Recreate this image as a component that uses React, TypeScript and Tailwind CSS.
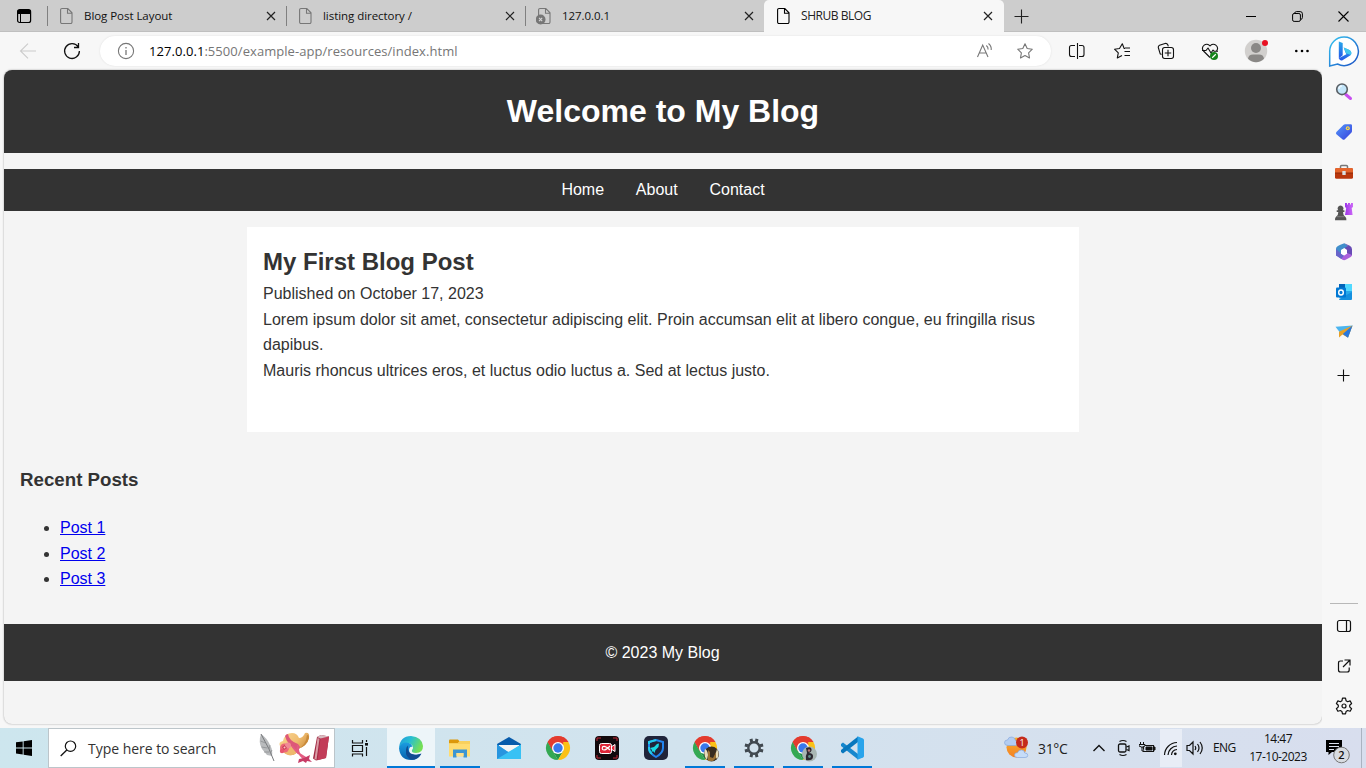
import React from "react";

const ui = "font-['Open_Sans','Noto_Sans',sans-serif]";

type P = { children: React.ReactNode; w?: number; h?: number; vb?: string; className?: string };
const Svg = ({ children, w = 24, h = 24, vb, className = "" }: P) => (
  <svg width={w} height={h} viewBox={vb ?? `0 0 ${w} ${h}`} fill="none" className={`block shrink-0 ${className}`}>
    {children}
  </svg>
);

const FileIcon = ({ color, error }: { color: string; error?: boolean }) => (
  <Svg w={16} h={18}>
    <path d="M4 1.5h5.8L14 5.8v9.2a1.4 1.4 0 0 1-1.4 1.5H4A1.4 1.4 0 0 1 2.6 15V3A1.4 1.4 0 0 1 4 1.5Z M9.5 1.6v4.6h4.4" stroke={color} strokeWidth="1.1" />
    {error && (
      <>
        <circle cx="4.6" cy="12.5" r="4.9" fill="#767676" />
        <path d="m3 10.900 3.200 3.200m0-3.200L3 14.100" stroke="#d8d8d8" strokeWidth="1.1" />
      </>
    )}
  </Svg>
);

const Close = () => (
  <Svg w={10} h={10}>
    <path d="m1 1 8 8M9 1 1 9" stroke="#222" strokeWidth="1.2" />
  </Svg>
);

const Tab = ({ title, error }: { title: string; error?: boolean }) => (
  <div className="flex h-8 w-[239px] shrink-0 items-center pr-[10px]">
    <div className="h-5 w-px bg-[#808080]" />
    <div className="ml-[10px]"><FileIcon color="#777" error={error} /></div>
    <span className="ml-[10px] flex-1 text-[11.5px] tracking-[-0.05px] text-[#111]">{title}</span>
    <Close />
  </div>
);

const TabBar = () => (
  <div className="flex h-8 shrink-0 bg-[#cdcdcd] shadow-[inset_0_-1px_0_#bfbfbf]">
    <div className="flex w-[47px] items-center pl-4">
      <Svg w={16} h={16}>
        <rect x="1.6" y="1.700" width="13" height="12.800" rx="2" stroke="#000" strokeWidth="1.200" />
        <path d="M2 2.500h12v3H2zM4.500 5v9" fill="#000" stroke="#000" />
      </Svg>
    </div>
    <Tab title="Blog Post Layout" />
    <Tab title="listing directory /" />
    <Tab title="127.0.0.1" error />
    <div className="flex h-8 w-[240px] items-center rounded-t-[5px] bg-[#f7f7f7] pr-[11px] pl-[11px]">
      <FileIcon color="#000" />
      <span className="ml-[10px] flex-1 text-[12px] tracking-[-0.45px] text-[#222]">SHRUB BLOG</span>
      <Close />
    </div>
    <div className="flex items-center pl-[10px]">
      <Svg w={15} h={15}><path d="M7.500 .5v14M.5 7.500h14" stroke="#222" strokeWidth="1.100" /></Svg>
    </div>
    <div className="ml-auto flex items-center">
      <div className="flex w-[46px] justify-center"><Svg w={10} h={10}><path d="M0 5.500h10" stroke="#000" /></Svg></div>
      <div className="flex w-[46px] justify-center">
        <Svg w={11} h={11}>
          <rect x=".6" y="2.500" width="7.800" height="7.900" rx="1.500" stroke="#000" />
          <path d="M2.500 2.200Q3 .6 4.500.6h3.700q2.200 0 2.200 2.200v3.700q0 1.500-1.500 2" stroke="#000" />
        </Svg>
      </div>
      <div className="flex w-[46px] justify-center"><Svg w={11} h={11}><path d="m.5.5 10 10m0-10-10 10" stroke="#000" strokeWidth="1.100" /></Svg></div>
    </div>
  </div>
);

const STAR = "m9 1.800 2.200 4.700 5.100.7-3.700 3.600.9 5.100L9 13.500l-4.500 2.400.9-5.100-3.700-3.600 5.100-.7Z";

const Toolbar = () => (
  <div className="flex h-[38px] shrink-0 items-center bg-[#f7f7f7]">
    <div className="flex w-[100px] pl-[19px]">
      <Svg w={18} h={18}><path d="M17 9H1.500M9 1.700 1.500 9 9 16.300" stroke="#ccc" strokeWidth="1.100" /></Svg>
      <Svg w={18} h={18} className="ml-[26px]">
        <path d="M15.200 5A7.400 7.400 0 1 0 16.400 9M15.500 1v4.500H11" stroke="#111" strokeWidth="1.300" />
      </Svg>
    </div>
    <div className="flex h-[30px] w-[951px] items-center rounded-full bg-white pr-[17px] pl-[17px] shadow-[0_0_2px_#ddd]">
      <Svg w={18} h={18}>
        <circle cx="9" cy="9" r="7.600" stroke="#777" strokeWidth="1.100" />
        <path d="M9 8v5M9 5v1.500" stroke="#777" strokeWidth="1.300" />
      </Svg>
      <span className="ml-[14px] flex-1 pt-px text-[13px] tracking-[0.06px] text-[#767676]">
        <span className="text-black">127.0.0.1</span>:5500/example-app/resources/index.html
      </span>
      <Svg w={18} h={18}>
        <path d="M1.500 15 6.700 3 12 15M3.400 11h6.800M10.300 3.500q2 1.600 1.800 4M12.500 1.500q3.200 2.600 2.700 6.500" stroke="#777" strokeWidth="1.100" />
      </Svg>
      <Svg w={18} h={18} className="ml-[22px]"><path d={STAR} stroke="#777" strokeWidth="1.100" strokeLinejoin="round" /></Svg>
    </div>
    <div className="flex flex-1 items-center pl-[17px]">
      <Svg w={18} h={18}>
        <path d="M7 3.500H3.500Q1.500 3.500 1.500 5.500v7q0 2 2 2H7M11 3.500h3q2 0 2 2v7q0 2-2 2H11M9.500 1v16" stroke="#111" strokeWidth="1.100" />
      </Svg>
      <Svg w={18} h={18} className="ml-[27px]">
        <path d="M12 6.500h-.8L9.300 1.800 6.500 6.500l-5 .7 3.800 3.700-1 5L9 13.500M11.500 9.500H17M11.500 13.500H17M12 6h5" stroke="#111" strokeWidth="1.100" strokeLinejoin="round" />
      </Svg>
      <Svg w={18} h={18} className="ml-[26px]">
        <path d="M4.500 12.500 3.200 11.800 1.300 5.500Q1 4 2.500 3.300L8 1.500q2-.4 2.800 1.300l.5 1.500" stroke="#111" strokeWidth="1.100" />
        <rect x="5.500" y="5.500" width="11" height="11" rx="2.200" stroke="#111" strokeWidth="1.100" />
        <path d="M11 7.800v6.400M7.800 11h6.400" stroke="#111" strokeWidth="1.100" />
      </Svg>
      <Svg w={20} h={19} className="ml-[26px]">
        <path d="M9 15.500 2.500 9C-.8 4.500 5.500-.5 9 4c3.500-4.500 9.800.5 6.500 5M1 8.500h4L7 6l3 5 2-3 1 1.200h4" stroke="#111" strokeWidth="1.100" strokeLinejoin="round" />
        <circle cx="13" cy="14" r="4" fill="#15831a" />
        <path d="m11.200 15.700 3.600-3.400" stroke="#fff" strokeWidth="1.200" />
      </Svg>
      <Svg w={26} h={26} className="ml-[23px]">
        <circle cx="12" cy="13" r="11.200" fill="#d2d0ce" />
        <circle cx="12" cy="10" r="5" fill="#8a8886" />
        <path d="M4 20.800Q4.500 16.500 9 16.500h6q4.500 0 5 4.300Q16.500 24.200 12 24.200T4 20.800Z" fill="#8a8886" />
        <circle cx="21" cy="5" r="3" fill="#e81123" />
      </Svg>
      <Svg w={16} h={16} className="ml-6">
        <circle cx="2.300" cy="8" r="1.300" fill="#000" /><circle cx="8" cy="8" r="1.300" fill="#000" /><circle cx="13.500" cy="8" r="1.300" fill="#000" />
      </Svg>
    </div>
  </div>
);

const Page = () => (
  <div className="ml-1 h-[654px] w-[1318px] overflow-hidden rounded-lg bg-[#f4f4f4] font-['Liberation_Sans',Arial,sans-serif] text-base leading-[1.6] text-[#333] shadow-[0_0_2px_#999]">
    <header className="bg-[#333] p-4 text-center text-white">
      <h1 className="text-[32px] leading-[51.2px] font-bold">Welcome to My Blog</h1>
    </header>
    <nav className="my-4 flex justify-center gap-[31.8px] bg-[#333] py-2 text-white">
      <a>Home</a>
      <a>About</a>
      <a>Contact</a>
    </nav>
    <article className="mx-auto h-[205px] w-[832px] bg-white p-4">
      <h2 className="text-2xl leading-[38.4px] font-bold">My First Blog Post</h2>
      <p>Published on October 17, 2023</p>
      <p>Lorem ipsum dolor sit amet, consectetur adipiscing elit. Proin accumsan elit at libero congue, eu fringilla risus dapibus.</p>
      <p>Mauris rhoncus ultrices eros, et luctus odio luctus a. Sed at lectus justo.</p>
    </article>
    <aside className="mt-[17.5px] p-4">
      <h3 className="mb-[19.8px] text-[18.72px] leading-[30px] font-bold">Recent Posts</h3>
      <ul className="mb-4 list-disc pl-10">
        <li><a className="text-[#0000ee] underline">Post 1</a></li>
        <li><a className="text-[#0000ee] underline">Post 2</a></li>
        <li><a className="text-[#0000ee] underline">Post 3</a></li>
      </ul>
    </aside>
    <footer className="h-[57px] bg-[#333] p-4 pr-[17px] text-center text-white">© 2023 My Blog</footer>
  </div>
);

const Cell = ({ children }: { children: React.ReactNode }) => (
  <div className="flex h-10 w-full items-center justify-center">{children}</div>
);

const Sidebar = () => (
  <div className="flex w-11 flex-col items-center bg-[#f7f7f7]">
    <Cell>
      <Svg w={32} h={32}>
        <defs>
          <linearGradient id="ring" x1="0" y1="0" x2="1" y2="1"><stop stopColor="#35c5f0" /><stop offset="1" stopColor="#1b4fc4" /></linearGradient>
          <linearGradient id="bee" x1="0" y1="0" x2="0" y2="1"><stop stopColor="#28a8ea" /><stop offset="1" stopColor="#2357e8" /></linearGradient>
        </defs>
        <path d="M16 1A14.300 14.300 0 1 1 9.500 28L1.700 30V15.300A14.300 14.300 0 0 1 16 1Z" fill="#fff" stroke="url(#ring)" strokeWidth="1.500" />
        <path d="m10.800 5.500 3.900 1.500v12.200l-3.900 3.300Z" fill="url(#bee)" />
        <path d="m15.700 11.500 5.200 2.300q3.500 1.800 2 5.200l-8.400 5.200q-2.500.8-3.700-2l7.600-4-1.300-2.600Z" fill="url(#bee)" />
        <path d="m15.700 11.500 5.200 2.300q3.500 1.800 2 5.200l-5-1.700-.7-2Z" fill="#42c8ed" />
      </Svg>
    </Cell>
    <Cell>
      <Svg w={18} h={18} className="mr-px">
        <path d="m10.800 11.500 4.700 4" stroke="#c84ef0" strokeWidth="3" strokeLinecap="round" />
        <circle cx="7" cy="6.300" r="5.300" fill="#c3e6fa" stroke="#595f65" strokeWidth="1.600" />
        <path d="M4 6a3 3 0 0 1 3-3" stroke="#edf8ff" strokeWidth="1.500" />
      </Svg>
    </Cell>
    <Cell>
      <Svg w={18} h={18}>
        <defs><linearGradient id="tag" x1="0" y1="0" x2="1" y2="1"><stop stopColor="#5598fa" /><stop offset="1" stopColor="#3740dc" /></linearGradient></defs>
        <path d="m1.400 9 7-7Q9 1.300 10.200 1.200h5.500q1.300 0 1.300 1.300V8q0 1-.7 1.700l-6.500 6.500q-1.200 1-2.400 0L1.400 11.300q-1-1.100 0-2.300Z" fill="url(#tag)" />
        <circle cx="12.800" cy="5.200" r="2" fill="#f9d84a" /><circle cx="12.800" cy="5.200" r=".8" fill="#4267d5" />
      </Svg>
    </Cell>
    <Cell>
      <Svg w={20} h={18}>
        <path d="M6.500 5V3.600q0-1.200 1.200-1.200h4.600q1.200 0 1.200 1.200V5" stroke="#777" strokeWidth="1.500" />
        <rect x="1" y="5" width="18" height="10.800" rx="1.500" fill="#b9370d" /><path d="M2.500 5h15Q19 5 19 6.500V10H1V6.500Q1 5 2.500 5Z" fill="#e5652c" />
        <path d="M1 10h18" stroke="#8e2d0b" /><rect x="8.300" y="8" width="3.400" height="4" rx=".6" fill="#d9dfe2" />
      </Svg>
    </Cell>
    <Cell>
      <Svg w={20} h={20}>
        <defs><linearGradient id="rook" x1="0" y1="0" x2="1" y2="0"><stop stopColor="#9b35e8" /><stop offset="1" stopColor="#cf6af7" /></linearGradient></defs>
        <path d="M11 1h2v1.500h1V1h2v1.500h1V1h2v4l-1.300 1 .9 7H11l1.200-7-1.200-1Z" fill="url(#rook)" />
        <path d="M6.500 3.500A3 3 0 0 1 8.900 8.300h1.500V10H9q0 3 2 4.500 1.700 1 1.400 3.800H1q-.3-2.800 1.300-3.800 2-1.500 2-4.500H2.700V8.300h1.500a3 3 0 0 1 2.300-4.800Z" fill="#555" />
        <path d="M3 14.700h7.500" stroke="#888" strokeWidth=".8" />
      </Svg>
    </Cell>
    <Cell>
      <Svg w={18} h={18}>
        <path d="M6 1.600 9.300.3l3.500 2.500v3L9.500 5 6 7v4.700L1 12.500V5.800q0-2.500 5-4.200Z" fill="#418fcb" />
        <path d="m9.300.3 5.500 2.500q2.200 1.200 2.200 3.500v6.200l-5-2V7L9.500 5l3.300-2Z" fill="#684bb5" />
        <path d="m17 12-5-2-3 2.500-3-1.500-5 1 6.500 4.800q1.600.8 3.200 0l5-2.800q1.300-.9 1.300-2Z" fill="#aa60dc" />
        <path d="M1 6 6 10.500l3 2-2.700 3.600L1 12.500Z" fill="#6864ca" />
        <path d="m9 5.500 3 1.700v3.500L9 12.500l-3-1.800V7.200Z" fill="#fff" />
      </Svg>
    </Cell>
    <Cell>
      <Svg w={18} h={18}>
        <rect x="4" y="1" width="13" height="14" rx="1" fill="#28a8ea" /><path d="M10 1h7v7h-7z" fill="#50d9ff" /><path d="M4 1h6v7H4z" fill="#0364b8" />
        <path d="m4 16 13-7v7q0 1-1 1H5q-1 0-1-1Z" fill="#1490df" />
        <rect x="1" y="4.500" width="10" height="10" rx="1" fill="#0078d4" /><ellipse cx="6" cy="9.500" rx="2.300" ry="2.500" stroke="#fff" strokeWidth="1.400" />
      </Svg>
    </Cell>
    <Cell>
      <Svg w={18} h={18}>
        <path d="m.5 3.800 17-1.300L13 14.500 4.500 9Z" fill="#4cb5ef" /><path d="M17.500 2.500 4 8.800v5.700l3.500-3 5.500 3Z" fill="#e8a126" /><path d="M17.500 2.500 7.800 11l5.200 3.800Z" fill="#2877dd" />
      </Svg>
    </Cell>
    <div className="mr-px flex h-[47px] items-center">
      <Svg w={13} h={13}><path d="M6.500.5v12M.5 6.500h12" stroke="#111" strokeWidth="1.100" /></Svg>
    </div>
    <div className="mt-auto mb-[2px] h-px w-7 bg-[#b8b8b8]" />
    <Cell>
      <Svg w={16} h={16}><rect x="1.500" y="2.500" width="13" height="11" rx="2" stroke="#111" strokeWidth="1.200" /><path d="M10.500 2.500v11" stroke="#111" strokeWidth="1.200" /></Svg>
    </Cell>
    <Cell>
      <Svg w={16} h={16}><path d="M7 3H4.500q-2 0-2 2v7q0 2 2 2h6.700q2 0 2-2V9.500M8.500 2H14v5.500M14 2 7 9" stroke="#111" strokeWidth="1.200" /></Svg>
    </Cell>
    <div className="mb-[2px] w-full">
      <Cell>
        <Svg w={18} h={18}>
          <path d="m7.500 1.200h3l.6 2.600 1.500.9 2.500-.8 1.500 2.600-1.900 1.800v1.600l1.900 1.800-1.500 2.600-2.500-.8-1.500.9-.6 2.500h-3l-.6-2.500-1.500-.9-2.500.8-1.500-2.600 1.900-1.800V8.300L1.400 6.500l1.500-2.600 2.500.8 1.500-.9Z" stroke="#111" strokeWidth="1.200" strokeLinejoin="round" />
          <circle cx="9" cy="9" r="2" stroke="#111" strokeWidth="1.200" />
        </Svg>
      </Cell>
    </div>
  </div>
);

const Chrome = ({ badge }: { badge?: "gold" | "teal" }) => (
  <Svg w={28} h={28}>
    <path d="M14 14 3.600 8A12 12 0 0 1 24.400 8Z" fill="#ea4335" />
    <path d="M3.600 8 14 26A12 12 0 0 1 3.600 8Z" fill="#34a853" />
    <path d="M3.600 8 8.800 17 14 26l5.500-9.500L14 14Z" fill="#249547" />
    <path d="M24.400 8A12 12 0 0 1 14 26l5.200-9V8Z" fill="#fbc116" />
    <path d="M14 8h10.400A12 12 0 0 0 3.600 8l5.200 9Z" fill="#e33b2e" />
    <circle cx="14" cy="14" r="6" fill="#fff" /><circle cx="14" cy="14" r="4.700" fill="#3978ed" />
    {badge === "gold" && (
      <>
        <circle cx="20.500" cy="20" r="7.500" fill="#382d20" />
        <path d="M14 15q2.500 1 3 6l-1 5Q12 22 14 15ZM26 15q3 5 0 10l-2-3Z" fill="#e9ddba" />
        <path d="m17 16 2 2v5l3 1 3-6v6l-3 3h-5Z" fill="#9b7234" />
      </>
    )}
    {badge === "teal" && (
      <>
        <circle cx="20.500" cy="20" r="7.500" fill="#a9b7b4" />
        <path d="M17 14q5-2 5.500 1t-3 4q5 0 4.500 4t-7 3q-1-4 1-7Z" fill="#2d2831" /><circle cx="20" cy="16.500" r="1.200" fill="#b9787a" /><circle cx="20.500" cy="22.500" r="1.400" fill="#608d88" />
      </>
    )}
  </Svg>
);

const TaskItem = ({ children, state = "idle" }: { children: React.ReactNode; state?: "idle" | "open" | "active" }) => (
  <div className={`mr-px flex h-10 w-12 flex-col items-center ${state === "active" ? "bg-[#edf5f9]" : ""}`}>
    <div className="flex h-[38px] items-center pt-[2px]">{children}</div>
    {state !== "idle" && <div className={`h-[2px] bg-[#0078d7] ${state === "active" ? "w-12" : "w-10"}`} />}
  </div>
);

const Taskbar = () => (
  <div className="flex h-10 shrink-0 items-center bg-linear-to-r from-[#cde6ee] via-[#d2e3ee] to-[#d8deee]">
    <div className="flex w-12 justify-center">
      <Svg w={16} h={16}><path d="m0 2.300 6.700-.9v6H0ZM7.600 1.200 16 0v7.400H7.600ZM0 8.400h6.700v6.200L0 13.600ZM7.600 8.400H16V16l-8.400-1.200Z" fill="#000" /></Svg>
    </div>
    <div className="flex h-10 w-[287px] items-center border border-[#bcc5ca] bg-white pl-[11px]">
      <Svg w={17} h={17}><circle cx="10.500" cy="6.200" r="5.200" stroke="#111" strokeWidth="1.200" /><path d="M6.800 10 .7 16" stroke="#111" strokeWidth="1.300" /></Svg>
      <span className="ml-[11px] flex-1 text-[14px] tracking-[-0.03px] text-[#333]">Type here to search</span>
      <Svg w={76} h={36}>
        <defs>
          <linearGradient id="straw" x1="0" y1="0" x2="1" y2=".6"><stop stopColor="#f9d694" /><stop offset=".6" stopColor="#f0bd70" /><stop offset="1" stopColor="#c98a3a" /></linearGradient>
        </defs>
        <path d="M3 4Q0 12 4 19l5 6 5 1q1-6-2-11Q9 8 3 4Z" fill="#b9bbbd" />
        <path d="m3 4 8 15 5 12" stroke="#77797c" />
        <path d="m2.500 11 5 2M3.500 17l6 1M12 15l-1 4M14 20l-1.500 3M6 22l5.500 0" stroke="#8d8f92" strokeWidth=".8" />
        <path d="M22 16Q20 12 25 11Q27 3 34 3q5 0 7 5 4 0 6-5 5-1 4 5-2 8-11 11-1 7-9 6-8-2-9-9Z" fill="url(#straw)" />
        <path d="M40 19q8-4 9-14 2 0 2 3-2 8-11 11Z" fill="#c98a3a" />
        <path d="M27 6q1-2 3-2 1 7 10 10l2 3-2 4Q29 15 27 6Z" fill="#dd5878" />
        <path d="m26 15 11 4 2 3q-3 4-9 3-6-2-6-8Z" fill="#eeb96e" />
        <path d="M34 16q3 4 6 7l8 5M40 15q-2 7 6 14" stroke="#e35c82" strokeWidth="2" />
        <path d="m46 28 6-3-1 4 3 3-5-1-1 2-3-2-5 2 1-4Z" fill="#c73b66" />
        <circle cx="26.500" cy="18" r="4.500" fill="#ec6878" /><circle cx="30" cy="15.500" r="3" fill="#f08a95" /><circle cx="24" cy="21" r="2.200" fill="#e85570" />
        <path d="m24 17 2.500-2 2.500 3-3 2Z" fill="#c93b53" /><circle cx="26.500" cy="17.500" r="1" fill="#ffc2c2" />
        <path d="m59 7 4-2 8 1.500L68 28l-10 2.500-3-2Z" fill="#a22b45" />
        <path d="m62.500 8.500 8.500-2L68 28l-8.500 2.300Z" fill="#c23c58" />
        <path d="m59 7 4-2 8 1.500-8.500 2Z" fill="#d8bcc0" />
        <path d="m59.500 8 2 .7-3 21-2-.7Z" fill="#d99ca5" />
      </Svg>
    </div>
    <div className="flex w-[52px] items-center pl-[16px]">
      <Svg w={18} h={18}><path d="M1.500 1v3h10V1M1.500 6.500h10v6h-10zM1.500 17.500v-2.500h10v2.500M15.500 1v2M15.500 8v9" stroke="#111" strokeWidth="1.200" /><path d="M14 4h3v2.600h-3z" fill="#111" /></Svg>
    </div>
    <TaskItem state="active">
      <Svg w={26} h={26}>
        <defs>
          <linearGradient id="edgeTop" x1="0" y1="0" x2="1" y2=".4"><stop stopColor="#2097df" /><stop offset=".5" stopColor="#28bfd0" /><stop offset="1" stopColor="#74df55" /></linearGradient>
          <linearGradient id="edgeLow" x1="0" y1="0" x2="0" y2="1"><stop stopColor="#1b9ce0" /><stop offset="1" stopColor="#0861ad" /></linearGradient>
        </defs>
        <path d="M1 13Q2 1 13 1q11 1 12 10 0 7-7 7-5 0-4-3 2-2 0-5Q8 5 1 13Z" fill="url(#edgeTop)" />
        <path d="M1 13q3-7 10-5 3 1 3.500 4-3-1-3.500 3 0 7 12 4-3 6-10 6Q2 25 1 13Z" fill="url(#edgeLow)" />
        <path d="M10 10.500q-1 7 4 8.500 5 1.500 9.500-.5-3 6-9 6.300Q7 23 8 15q0-3 2-4.500Z" fill="#114b91" />
      </Svg>
    </TaskItem>
    <TaskItem state="open">
      <Svg w={24} h={22} className="mr-[2px]">
        <path d="M2 3.500q0-1 1-1h8L13 5v4H2Z" fill="#dc980b" /><path d="M2 6h9l2-2h10v15.500H2Z" fill="#ffdc70" /><path d="M2 6h9l2-2h10v3H2Z" fill="#f8d05d" />
        <path d="M6 12.500h14v8h-3.500V16h-7v4.500H6Z" fill="#3c96d2" /><path d="M9.500 16h7v3h-7Z" fill="#ffe08a" />
      </Svg>
    </TaskItem>
    <TaskItem>
      <Svg w={24} h={24}><path d="M0 8 12 1l12 7v5H0Z" fill="#075bab" /><path d="M2 9h20v6H2Z" fill="#f5f5f5" /><path d="m0 8.500 12 8 12-8V23H0Z" fill="#31b5ef" /><path d="M0 8.500 21 23H0Z" fill="#2795df" /><path d="m0 23 24-14.500V23Z" fill="#38c1f4" /></Svg>
    </TaskItem>
    <TaskItem><Chrome /></TaskItem>
    <TaskItem>
      <Svg w={24} h={24}><rect width="24" height="24" rx="4" fill="#11090c" /><path d="M2 5V2h4M18 2h4v3M2 19v3h4M18 22h4v-3" stroke="#c32936" /><path d="m16 11 4-2.500v7L16 13" fill="#df2638" stroke="#fff" /><rect x="4.500" y="7.500" width="12" height="10" rx="2" fill="#df2638" stroke="#fff" /><path d="M15 10Q11 14 9 14a1.800 1.800 0 1 1 0-3.600q2 0 6 3.600" stroke="#fff" strokeWidth="1.200" /></Svg>
    </TaskItem>
    <TaskItem>
      <Svg w={24} h={24}><rect width="24" height="24" rx="5" fill="#20243a" /><path d="m12 4 7 2v6q0 5-7 9-7-4-7-9V6Z" stroke="#2284ef" strokeWidth="2" /><path d="M5 8V6l7-2M5 11q0 5 3 7" stroke="#22cceb" strokeWidth="2" /><path d="m7 17 1-3-2-2 4-1 3-3 2-.5-.5 3.500-3 3-1 3-1.500-2Z" fill="#18dae4" /></Svg>
    </TaskItem>
    <TaskItem state="open"><Chrome badge="gold" /></TaskItem>
    <TaskItem state="open">
      <Svg w={20} h={20}>
        <circle cx="10" cy="10" r="5.700" stroke="#414950" strokeWidth="2.400" />
        <g stroke="#414950" strokeWidth="3"><path d="M7 .9 7.700 4M13 .9 12.300 4M7 19.100l.7-3.100M13 19.100l-.7-3.100M.9 7l3.100.7M.9 13l3.100-.7M19.100 7l-3.100.7M19.100 13l-3.100-.7" /></g>
      </Svg>
    </TaskItem>
    <TaskItem state="open"><Chrome badge="teal" /></TaskItem>
    <TaskItem state="open">
      <Svg w={24} h={24}><path d="m1 8 2-1.500L18 18v5.500L1 10Z" fill="#1687cd" /><path d="m1 16 2 1.500L18 6V.5L1 14Z" fill="#0877bd" /><path d="m17.500.2 5.500 2.300q1 .5 1 1.500v16q0 1-1 1.500l-5.500 2.300Z" fill="#29a4eb" /></Svg>
    </TaskItem>
    <div className="ml-auto flex h-10 items-center">
      <Svg w={26} h={26}>
        <defs><linearGradient id="sun" x1="0" y1="0" x2="0" y2="1"><stop stopColor="#f7b02c" /><stop offset="1" stopColor="#f48024" /></linearGradient></defs>
        <circle cx="12.500" cy="12.500" r="10" fill="url(#sun)" />
        <path d="M4 10.500q-3.500 0-3.500-2.800T3.500 5q1-3.500 4.500-3 3 .5 3.500 3.500 2.500 .3 2.500 2.500T11.500 10.500Z" fill="#b3cdf2" stroke="#88a9dc" strokeWidth=".7" />
        <path d="M13.500 22.500q-3 0-3-2.500t3-2.300q1-3 4-2.700 3 0 3.300 3 3 0 3 2.300t-2.800 2.200Z" fill="#c6dcf8" stroke="#88a9dc" strokeWidth=".7" />
        <circle cx="18" cy="7.500" r="6" fill="#c42b1c" /><text x="18" y="10.700" textAnchor="middle" fontSize="9" fill="#fff">1</text>
      </Svg>
      <span className="ml-[8px] w-[53px] text-[14px] tracking-[-0.35px] text-[#222]">31°C</span>
      <Svg w={14} h={10} className="ml-[1px]"><path d="m1.500 8 5.500-5.500L12.500 8" stroke="#111" strokeWidth="1.400" /></Svg>
      <Svg w={14} h={18} className="ml-[11px]"><rect x="1.500" y="5" width="7.500" height="8" rx="1.500" stroke="#111" strokeWidth="1.300" /><path d="m9.500 8 2.500-1v4.500L9.500 10.500M2.500 2.500Q6 .5 9.500 2.500M2.500 15.500q3.500 2 7 0" stroke="#111" strokeWidth="1.200" /></Svg>
      <Svg w={17} h={14} className="ml-[8px]"><path d="M4.500 4.500h10v6h-10z" stroke="#111" strokeWidth="1.200" /><path d="M7 6h6v3H7zM15 6h1v3h-1z" fill="#111" stroke="#111" /><path d="M1.500 1v2M4.500 1v2M0 3.500h6V5q-3 2.500-6 0ZM3 6v4h2" stroke="#111" fill="#d3dfed" /></Svg>
      <div className="ml-[4px] flex h-[38px] w-[22px] items-center justify-center bg-[#e8edf6]">
        <Svg w={16} h={16}><path d="M1.500 15A13 13 0 0 1 14 2.500M5 15a9.500 9.500 0 0 1 9-9M8.500 15a6 6 0 0 1 5.500-5.500" stroke="#111" strokeWidth="1.200" /><circle cx="12.300" cy="13.800" r="1.400" fill="#111" /></Svg>
      </div>
      <Svg w={18} h={16} className="ml-[4px]"><path d="M1 5.500h2.500L7 2v12l-3.500-3.500H1ZM9 6q1.500 2 0 4M11.500 4q3 4 0 8M14 2q4.500 6 0 12" stroke="#111" strokeWidth="1.200" /></Svg>
      <span className="ml-[9px] w-[25px] text-[12px] tracking-[-0.6px] text-[#111]">ENG</span>
      <div className="ml-[9px] flex w-[62px] flex-col items-center text-[12px] leading-[18px] tracking-[-0.5px] text-[#111]">
        <span>14:47</span>
        <span>17-10-2023</span>
      </div>
      <Svg w={26} h={26} className="mt-[5px] ml-[16px]">
        <path d="M1 2h16v12H7l-3.500 3V14H1Z" fill="#000" /><path d="M4 5.500h10M4 8.500h10M4 11.500h5" stroke="#dce1ed" strokeWidth="1.100" />
        <circle cx="16.500" cy="17" r="7.800" fill="#d8dce1" stroke="#777" /><text x="16.500" y="21" textAnchor="middle" fontSize="11" fontWeight="600" fill="#111">2</text>
      </Svg>
      <div className="mr-1 ml-[10px] h-10 w-px bg-[#aab3c1]" />
    </div>
  </div>
);

export default function App() {
  return (
    <div className={`flex h-[768px] w-[1366px] flex-col overflow-hidden bg-[#f7f7f7] ${ui}`}>
      <TabBar />
      <div className="flex h-[696px] shrink-0">
        <div className="flex w-[1322px] shrink-0 flex-col">
          <Toolbar />
          <Page />
        </div>
        <Sidebar />
      </div>
      <Taskbar />
    </div>
  );
}
